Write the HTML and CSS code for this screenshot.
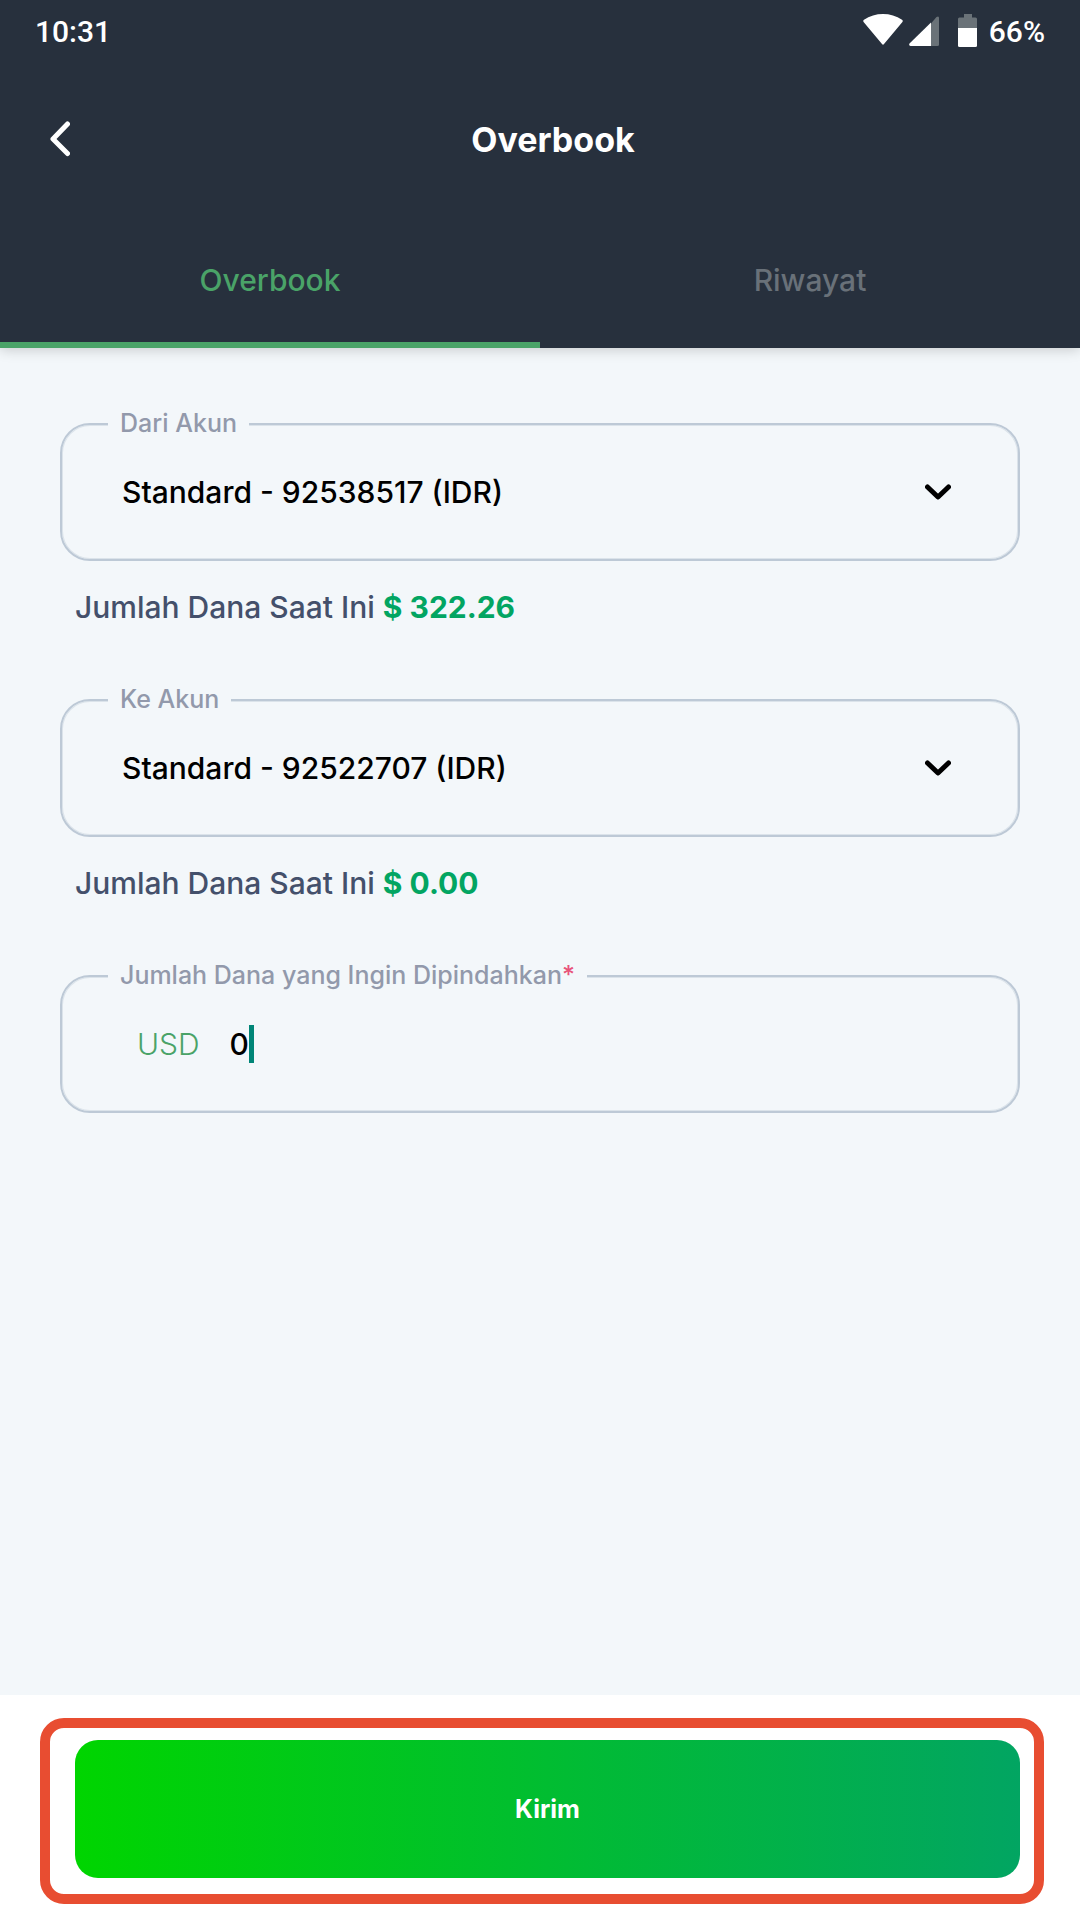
FILE: index.html
```html
<!DOCTYPE html>
<html lang="id">
  <head>
    <meta charset="UTF-8" />
    <meta name="viewport" content="width=device-width, initial-scale=1.0" />
    <title>Overbook</title>
    <link rel="stylesheet" href="styles.css">
  </head>
  <body>
    <header class="header">
      <div class="status-bar">
        <span>10:31</span>
        <div class="status-icons">
          <svg width="40" height="34" viewBox="0 0 40 34">
            <path d="M1 8.500Q-.5 7 1 5.800C12-1.900 28-1.900 39 5.800Q40.500 7 39 8.500L21 30Q20 31.500 19 30Z" fill="#fff" />
          </svg>
          <svg class="signal" width="30" height="34" viewBox="0 0 30 34">
            <path d="M22 9.500L27.500 3Q30 1.500 30 4V30.500Q30 32 28.500 32H22Z" fill="#6a7278" />
            <path d="M22 8.500V32H1.500Q-.5 31.500 .5 29.500Z" fill="#fff" />
          </svg>
          <svg class="battery" width="19" height="34" viewBox="0 0 19 34">
            <path d="M6 0H14V3.500H17.500Q19 3.500 19 5V14H0V5Q0 3.500 1.500 3.500H6Z" fill="#6a7278" />
            <path d="M0 14H19V31.500Q19 33 17.500 33H1.500Q0 33 0 31.500Z" fill="#fff" />
          </svg>
          <span>66%</span>
        </div>
      </div>

      <div class="title-bar">
        <button class="back" type="button" aria-label="Kembali">
          <svg width="20" height="36" viewBox="0 0 20 36">
            <path d="M17.500 3L3 18L17.500 32.500" fill="none" stroke="#fff" stroke-width="5" stroke-linecap="round" stroke-linejoin="round" />
          </svg>
        </button>
        <h1>Overbook</h1>
      </div>

      <nav class="tabs">
        <a class="tab active" href="#overbook">Overbook</a>
        <a class="tab" href="#riwayat">Riwayat</a>
      </nav>
    </header>

    <form class="form" id="overbook">
      <div class="field">
        <label for="from">Dari Akun</label>
        <select id="from">
          <option>Standard - 92538517 (IDR)</option>
        </select>
        <svg class="chevron" width="26" height="16" viewBox="0 0 26 16">
          <path d="M2.500 3L13 13L23.500 3" fill="none" stroke="#000" stroke-width="5" stroke-linecap="round" stroke-linejoin="round" />
        </svg>
      </div>
      <p class="balance">Jumlah Dana Saat Ini <strong>$ 322.26</strong></p>

      <div class="field">
        <label for="to">Ke Akun</label>
        <select id="to">
          <option>Standard - 92522707 (IDR)</option>
        </select>
        <svg class="chevron" width="26" height="16" viewBox="0 0 26 16">
          <path d="M2.500 3L13 13L23.500 3" fill="none" stroke="#000" stroke-width="5" stroke-linecap="round" stroke-linejoin="round" />
        </svg>
      </div>
      <p class="balance">Jumlah Dana Saat Ini <strong>$ 0.00</strong></p>

      <div class="field amount">
        <label for="amount">Jumlah Dana yang Ingin Dipindahkan<span class="required">*</span></label>
        <span class="currency">USD</span>
        <input type="text" id="amount" inputmode="decimal" value="0" />
        <span class="caret"></span>
      </div>
    </form>

    <footer class="footer">
      <div class="highlight">
        <button class="submit" type="submit" form="overbook">Kirim</button>
      </div>
    </footer>
  </body>
</html>
```

FILE: styles.css
```css
* {
  box-sizing: border-box;
}
body {
  display: flex;
  flex-direction: column;
  min-height: 100vh;
  margin: 0;
  background: #f3f7fa;
  font-family: Inter, sans-serif;
  font-size: 30px;
  font-weight: 500;
}
h1,
p {
  margin: 0;
}
button {
  border: none;
  cursor: pointer;
}

.header {
  background: #27303d;
  box-shadow: 0 2px 12px rgba(0, 0, 0, 0.18);
  color: #fff;
}
.status-bar {
  display: flex;
  justify-content: space-between;
  align-items: center;
  height: 62px;
  padding: 0 35px;
  font-family: Roboto, sans-serif;
}
.status-icons {
  display: flex;
  align-items: center;
}
.signal {
  margin-left: 6px;
}
.battery {
  margin: 0 12px 0 19px;
}
.title-bar {
  display: grid;
  grid-template-columns: 100px 1fr 74px;
  align-items: center;
  height: 154px;
}
.title-bar h1 {
  font-size: 34px;
  font-weight: 700;
  text-align: center;
}
.back {
  display: flex;
  padding: 10px 30px 10px 50px;
  background: none;
}
.tabs {
  display: flex;
}
.tab {
  flex: 1;
  height: 132px;
  padding-top: 3px;
  border-bottom: 6px solid transparent;
  color: #697179;
  line-height: 122px;
  text-align: center;
  text-decoration: none;
}
.tab.active {
  border-color: #4aa368;
  color: #4aa368;
}

.form {
  flex: 1;
  padding: 75px 60px 60px;
}
.field {
  position: relative;
  display: flex;
  align-items: center;
  height: 138px;
  border: 2px solid #bdc9d6;
  border-radius: 30px;
  box-shadow: inset 0 0 0 1px #dbe3ea;
}
.field label {
  position: absolute;
  top: -17px;
  left: 46px;
  padding: 0 12px;
  background: #f3f7fa;
  color: #9299ab;
  font-size: 25px;
  line-height: 30px;
}
.required {
  color: #e8547a;
}
.field select {
  width: 100%;
  height: 100%;
  padding: 0 120px 0 60px;
  appearance: none;
  border: none;
  outline: none;
  background: none;
  color: #000;
  font: inherit;
}
.chevron {
  position: absolute;
  right: 67px;
  pointer-events: none;
}
.balance {
  height: 138px;
  padding: 26px 15px 0;
  color: #44506b;
  line-height: 40px;
}
.balance strong {
  color: #02a562;
  font-weight: 700;
}
.amount {
  padding-left: 75px;
}
.currency {
  margin-right: 30px;
  color: #4aa368;
  font-weight: 300;
}
.amount input {
  field-sizing: content;
  padding: 0;
  border: none;
  outline: none;
  background: none;
  color: #000;
  font: inherit;
}
.caret {
  width: 5px;
  height: 38px;
  background: #008577;
}

.footer {
  padding: 23px 36px 16px 40px;
  background: #fff;
}
/* red guide frame around the submit button */
.highlight {
  padding: 12px 14px 16px 25px;
  border: 10px solid #e84d31;
  border-radius: 24px;
}
.submit {
  display: block;
  width: 100%;
  height: 138px;
  border-radius: 23px;
  background: linear-gradient(to right, #00d500, #02a562);
  color: #fff;
  font: inherit;
  font-size: 25px;
  font-weight: 700;
}
```
